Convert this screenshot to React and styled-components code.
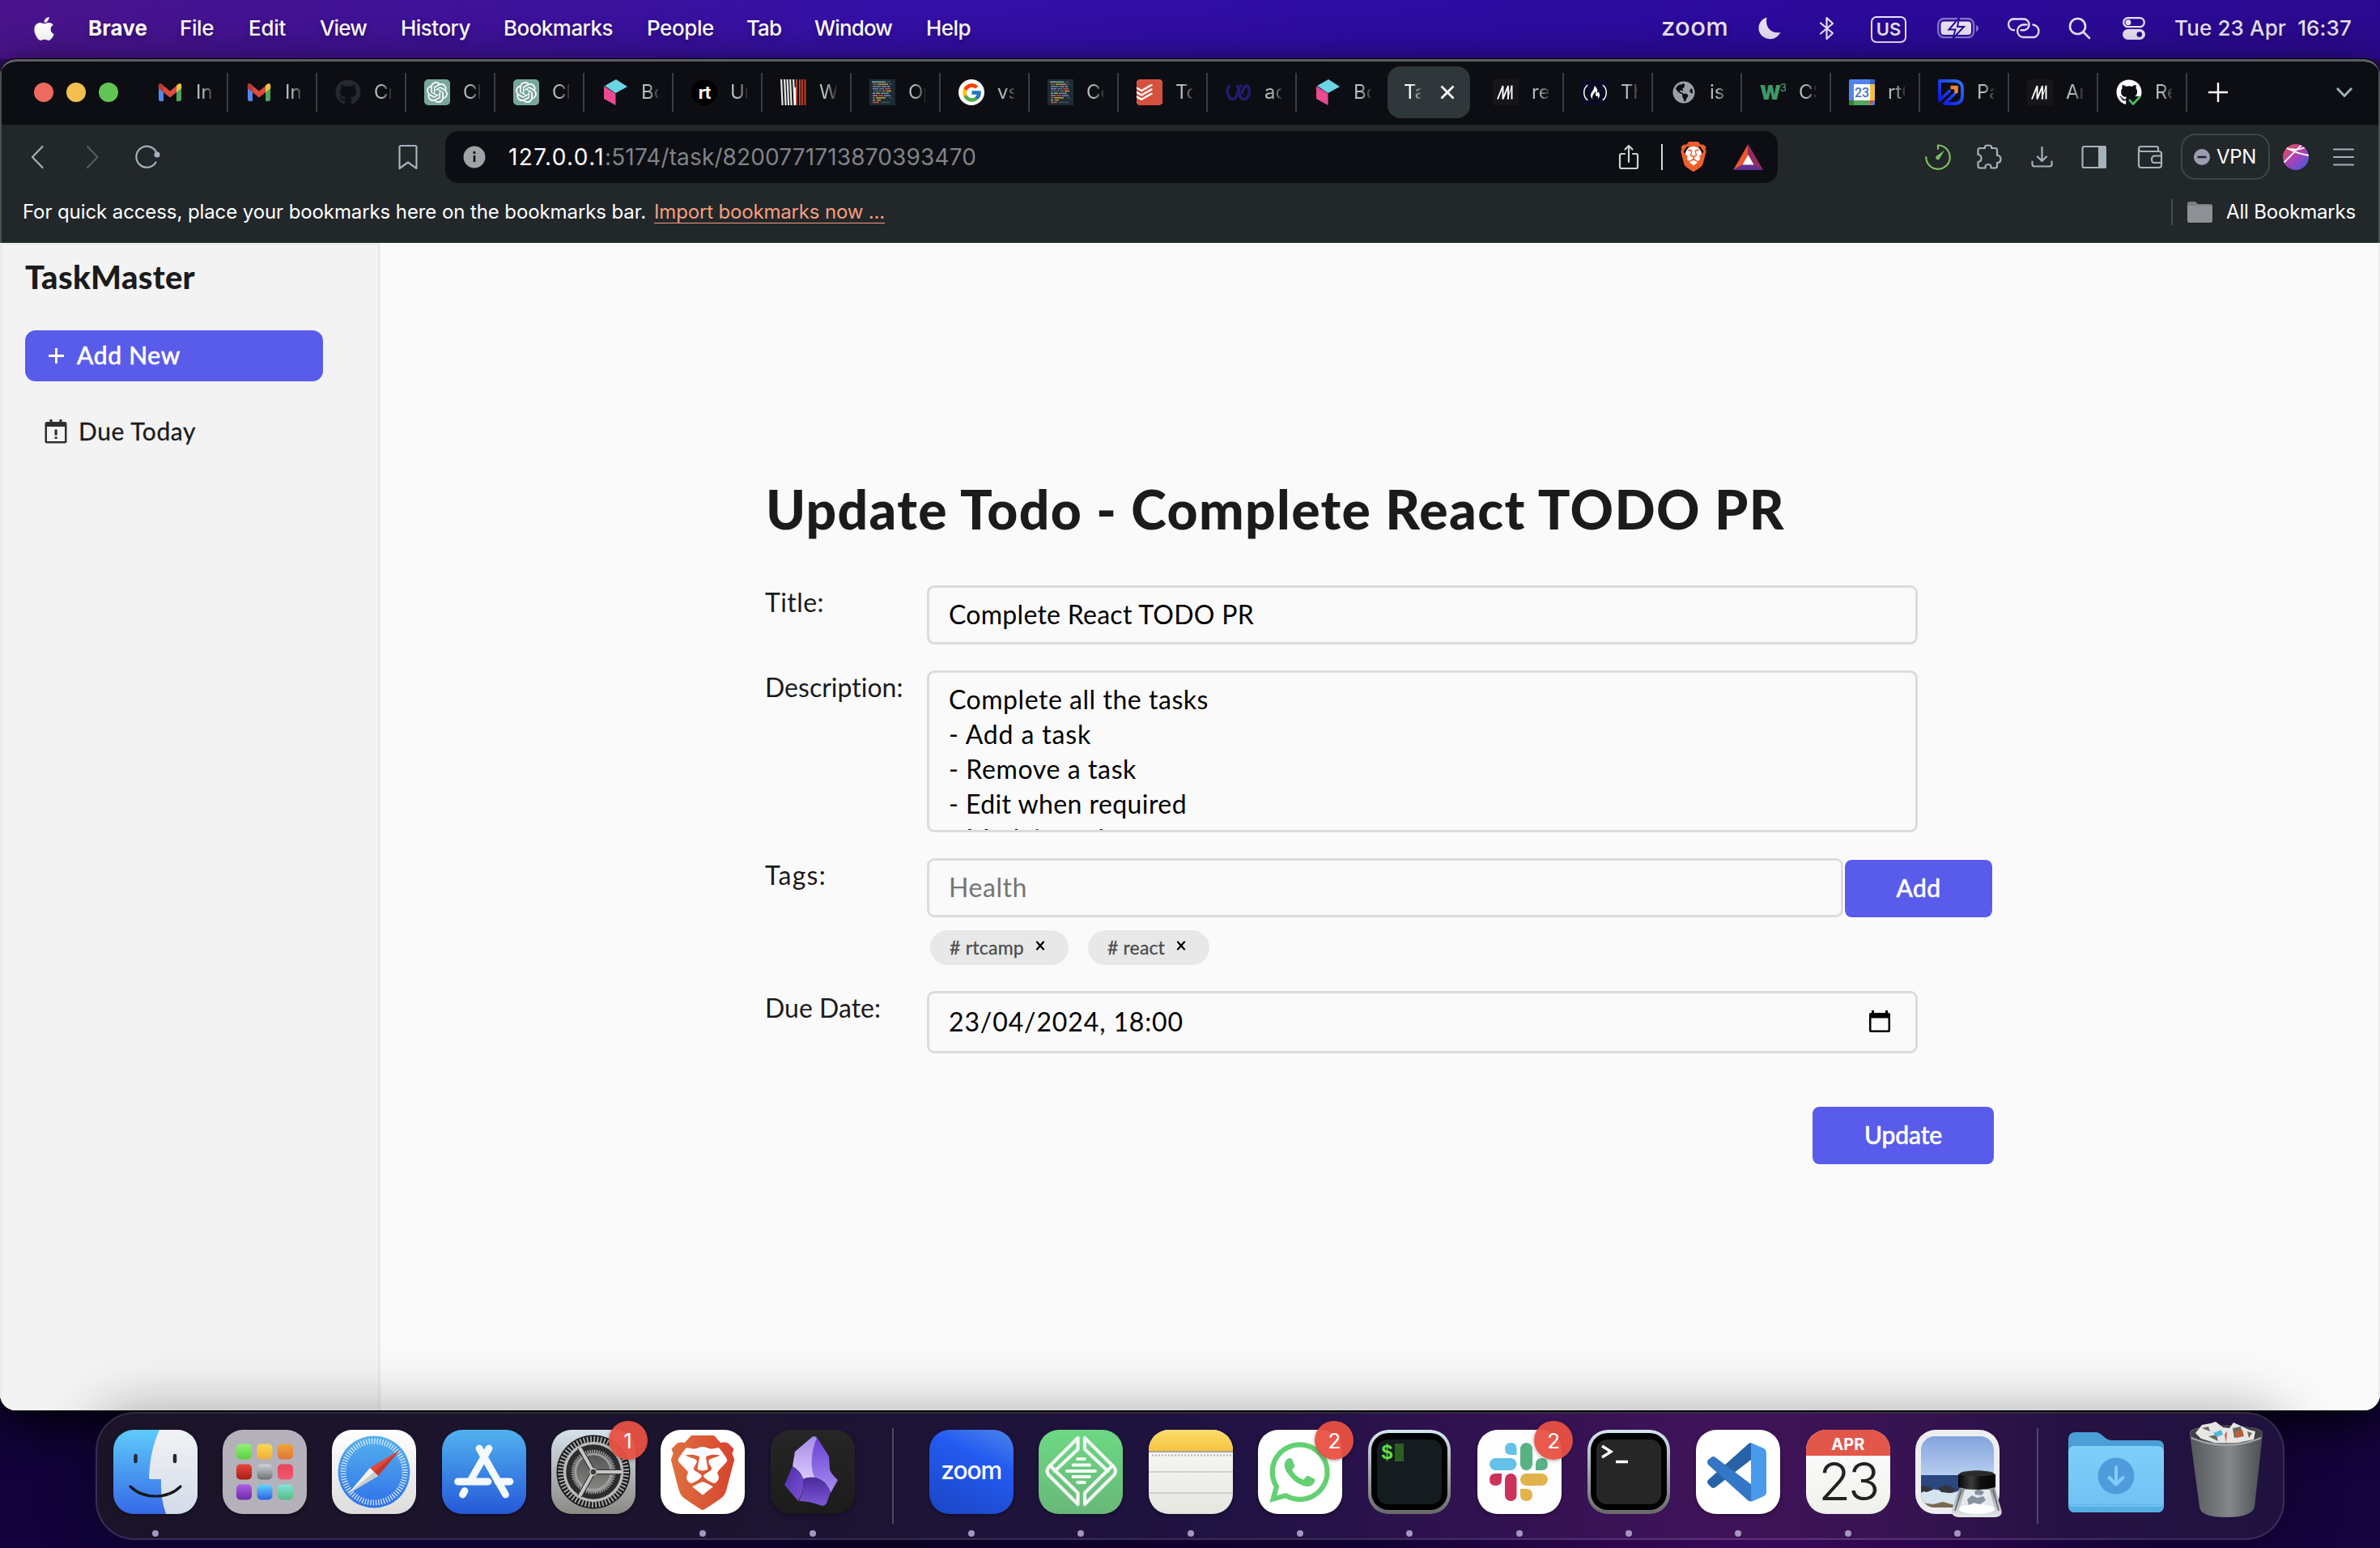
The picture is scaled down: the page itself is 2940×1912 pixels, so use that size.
import React, { useLayoutEffect, useRef, useState } from "react";
import styled, { createGlobalStyle, css } from "styled-components";
import { FaApple, FaGithub, FaWhatsapp, FaGlobeAmericas } from "react-icons/fa";
import { FcGoogle } from "react-icons/fc";
import { SiBrave, SiOpenai, SiTodoist, SiFreecodecamp } from "react-icons/si";

const ui = `Inter, "Liberation Sans", sans-serif`;
const body = `Lato, "Open Sans", sans-serif`;

const GlobalStyle = createGlobalStyle`
  *, *::before, *::after { box-sizing: border-box; }
  body { margin: 0; overflow: hidden; background: #0a0320; }
  svg { display: block; flex: none; }
`;

/* Text that spreads its letters to occupy a given width. */
const Spread = styled.span`
  display: inline-block;
  white-space: pre;
  flex: none;
`;

function Fit({ w, children }) {
  const ref = useRef(null);
  const [spacing, setSpacing] = useState(0);
  useLayoutEffect(() => {
    const natural = ref.current.getBoundingClientRect().width;
    setSpacing((w - natural) / children.length);
  }, []);
  return (
    <Spread ref={ref} style={{ letterSpacing: spacing }}>
      {children}
    </Spread>
  );
}

const Desktop = styled.div`
  width: 2940px;
  height: 1912px;
  display: flex;
  flex-direction: column;
  overflow: hidden;
  font-family: ${ui};
  background:
    linear-gradient(90deg, #2c0c58 0, #3d1190 1%, #2a0a90 98%, #2a0860 100%) 0 0 / 100% 110px no-repeat,
    linear-gradient(213deg, transparent 49.4%, #0d0226 49.5%, #11033a 70%) 0 100% / 2000px 170px no-repeat,
    radial-gradient(ellipse 500px 260px at 2180px 1850px, #4a0f70 0, #33085a 45%, rgba(19, 3, 60, 0) 100%),
    linear-gradient(90deg, #0b0228 0, #0d0226 30%, #14033c 60%, #14033c 100%);
`;

/* ---------- menu bar ---------- */

const MenuBar = styled.header`
  height: 73px;
  flex: none;
  display: flex;
  align-items: center;
  padding: 0 35px 4px 41px;
  color: #fff;
  font-size: 26px;
  font-weight: 500;
  background: linear-gradient(90deg, #4a148c 0, #3b119c 25%, #3510a6 36%, #2d0ca2 60%, #2b0a9a 80%, #2c0a90 100%);
  text-shadow: 0 3px 6px rgba(0, 0, 0, 0.3);
`;

const MenuItem = styled.span`
  width: ${(p) => p.$slot}px;
  flex: none;
  white-space: nowrap;
  font-weight: ${(p) => (p.$bold ? 700 : 500)};
`;

const AppleSlot = styled.span`
  width: 68px;
  flex: none;
  padding-top: 1px;
`;

const StatusArea = styled.div`
  margin-left: auto;
  display: flex;
  align-items: center;
  color: #e9e2f6;
`;

const StatusSlot = styled.span`
  display: flex;
  align-items: center;
  width: ${(p) => p.$slot}px;
  flex: none;
`;

const ZoomWord = styled.span`
  display: flex;
  font-family: ${ui};
  font-size: ${(p) => p.$size}px;
  line-height: 1;
  font-weight: 500;
  padding-bottom: ${(p) => p.$lift}px;
`;

const InputSource = styled.span`
  width: 44px;
  height: 33px;
  margin-top: 3px;
  border: 2.5px solid #e9e2f6;
  border-radius: 7px;
  display: flex;
  align-items: center;
  justify-content: center;
  font-size: 22px;
  font-weight: 600;
`;

const MENU = [
  ["Brave", 113, 73],
  ["File", 85, 42],
  ["Edit", 88, 46],
  ["View", 100, 58],
  ["History", 127, 86],
  ["Bookmarks", 177, 135],
  ["People", 123, 83],
  ["Tab", 84, 43],
  ["Window", 138, 96],
  ["Help", 60, 55],
];

function Menu() {
  return (
    <MenuBar>
      <AppleSlot>
        <FaApple size={33} style={{ marginLeft: -3 }} />
      </AppleSlot>
      {MENU.map(([name, slot, w], i) => (
        <MenuItem key={name} $slot={slot} $bold={i === 0}>
          <Fit w={w}>{name}</Fit>
        </MenuItem>
      ))}
      <StatusArea>
        <StatusSlot $slot={120}>
          <ZoomWord $size={31} $lift={4}>
            <Fit w={83}>zoom</Fit>
          </ZoomWord>
        </StatusSlot>
        <StatusSlot $slot={75}>
          <svg width="28" height="28" viewBox="0 0 28 28">
            <path d="M10.500 .5C8 12 15 21 27.500 19C24 25 19 28 13 27C5 26 0 20 .5 12.500C1 7 5 2 10.500 .5Z" fill="#e9e2f6" />
          </svg>
        </StatusSlot>
        <StatusSlot $slot={64}>
          <svg width="20" height="30" viewBox="0 0 20 30" fill="none" stroke="#e9e2f6" strokeWidth="2.2" strokeLinejoin="round" strokeLinecap="round">
            <path d="M2 8.500L17 21L9.500 28V2L17 9L2 21.500" />
          </svg>
        </StatusSlot>
        <StatusSlot $slot={82}>
          <InputSource>US</InputSource>
        </StatusSlot>
        <StatusSlot $slot={85}>
          <svg width="52" height="26" viewBox="0 0 52 26">
            <rect x="1.2" y="1.2" width="44" height="23" rx="7" fill="none" stroke="#8878cc" strokeWidth="2.2" />
            <path d="M48 9v8q3-1 3-4t-3-4z" fill="#8878cc" />
            <rect x="4.500" y="4.500" width="37.500" height="16.500" rx="4" fill="#e9e2f6" />
            <path d="M27 0L14.500 14.500h8l-3 11L33 11h-8z" fill="#e9e2f6" stroke="#2b0a9a" strokeWidth="2" />
          </svg>
        </StatusSlot>
        <StatusSlot $slot={77}>
          <svg width="44" height="26" viewBox="0 0 44 26" fill="none" stroke="#e9e2f6" strokeWidth="2.400" strokeLinecap="round">
            <path d="M10 15.200A7 7 0 0 1 8 1.500H23A7 7 0 0 1 23 15.200H18.500" />
            <path d="M33.500 8.500A8 8 0 0 1 35 24H21A7.800 7.800 0 0 1 21 8.500H25.500" />
          </svg>
        </StatusSlot>
        <StatusSlot $slot={67}>
          <svg width="28" height="28" viewBox="0 0 28 28" fill="none" stroke="#e9e2f6" strokeWidth="2.600" strokeLinecap="round">
            <circle cx="11.500" cy="11.500" r="9.500" />
            <path d="M18.500 18.500L26 26" />
          </svg>
        </StatusSlot>
        <StatusSlot $slot={64}>
          <svg width="28" height="28" viewBox="0 0 28 28">
            <rect x="1.200" y="1.200" width="25.600" height="11" rx="5.500" fill="none" stroke="#e9e2f6" strokeWidth="2.300" />
            <circle cx="7" cy="6.700" r="3.400" fill="#e9e2f6" />
            <rect x="0" y="15" width="28" height="13" rx="6.500" fill="#e9e2f6" />
            <circle cx="20.800" cy="21.500" r="3.300" fill="#2c0a92" />
          </svg>
        </StatusSlot>
        <Fit w={219}>{"Tue 23 Apr  16:37"}</Fit>
      </StatusArea>
    </MenuBar>
  );
}

/* ---------- browser window ---------- */

const Window = styled.section`
  height: 1669px;
  flex: none;
  display: flex;
  flex-direction: column;
  border-top: 3px solid #5c5f61;
  border-radius: 20px;
  overflow: hidden;
  background: #fafafa;
  box-shadow: 0 0 0 1px #000, 0 16px 60px rgba(0, 0, 0, 0.9);
`;

const chromeEdge = css`
  border: solid #4a4f52;
  border-width: 0 2px;
`;

const TabStrip = styled.div`
  ${chromeEdge}
  height: 78px;
  flex: none;
  display: flex;
  align-items: center;
  padding: 0 0 2px 40px;
  background: #0d0e13;
`;

const Lights = styled.div`
  display: flex;
  gap: 16px;
  width: 130px;
  flex: none;
`;

const Light = styled.span`
  width: 24px;
  height: 24px;
  border-radius: 50%;
  background: ${(p) => p.$color};
`;

const Tab = styled.div`
  width: 110px;
  height: 48px;
  flex: none;
  display: flex;
  align-items: center;
  gap: 16px;
  padding-left: 22px;
  border-right: 2px solid ${(p) => (p.$line ? "#3a3d42" : "transparent")};
`;

const TabLabel = styled.span`
  width: 21px;
  overflow: hidden;
  white-space: nowrap;
  font-size: 24px;
  line-height: 30px;
  color: ${(p) => (p.$active ? "#fff" : "#b9bcc1")};
  -webkit-mask-image: linear-gradient(90deg, #000 40%, rgba(0, 0, 0, 0.2) 100%);
  mask-image: linear-gradient(90deg, #000 40%, rgba(0, 0, 0, 0.2) 100%);
`;

const ActiveTab = styled.div`
  width: 102px;
  height: 64px;
  margin: 0 6px 0 2px;
  flex: none;
  display: flex;
  align-items: center;
  justify-content: space-between;
  padding: 0 19px 0 20px;
  border-radius: 16px;
  background: #30373a;
`;

const NewTab = styled.span`
  margin-left: 25px;
`;

const TabMenu = styled.span`
  margin-left: auto;
  padding-right: 31px;
`;

const Tile = styled.span`
  width: 32px;
  height: 32px;
  flex: none;
  display: flex;
  align-items: center;
  justify-content: center;
  overflow: hidden;
  color: ${(p) => p.$ink || "#fff"};
  background: ${(p) => p.$bg || "transparent"};
  border-radius: ${(p) => p.$r || 0}px;
  font-weight: ${(p) => p.$weight || 700};
  font-size: ${(p) => p.$size || 20}px;
  letter-spacing: ${(p) => p.$track || 0}px;
`;

const Superscript = styled.sup`
  font-size: 13px;
  line-height: 1;
  font-weight: 500;
  padding-top: 4px;
  align-self: flex-start;
`;

const Gmail = () => (
  <svg width="32" height="32" viewBox="0 0 32 32">
    <path d="M2 10v15q0 2 2 2h4V14z" fill="#4f87ee" />
    <path d="M30 10v15q0 2-2 2h-4V14z" fill="#4fa75a" />
    <path d="M8 8l8 6.500L24 8v8l-8 6.500L8 16z" fill="#dc4a3d" />
    <path d="M24 16V7.500q6-5 6.300.5v3z" fill="#f1bf42" />
    <path d="M8 16V7.500Q2 2.500 1.700 8v3z" fill="#b93a31" />
  </svg>
);
const Cube = () => (
  <svg width="32" height="32" viewBox="0 0 32 32">
    <path d="M17 0L31 9L16.500 17L3 8z" fill="#69d6e2" />
    <path d="M2 8.500l14.500 9V32L2 24z" fill="#ea4a90" />
  </svg>
);
const CODE_LINES = [
  [[3, 17, "#6fb5ae"], [21, 5, "#3c5361"]],
  [[4, 5, "#b9504e"], [10, 13, "#c59f3e"], [24, 4, "#3c5361"]],
  [[4, 10, "#5e8f97"], [15, 6, "#9a7fc0"], [22, 3, "#6fb5ae"]],
  [[4, 7, "#8f77c4"], [12, 6, "#5d7f93"], [19, 7, "#c94f4f"]],
  [[5, 10, "#4b6470"], [16, 4, "#c94f4f"], [21, 6, "#c59f3e"]],
  [[4, 3, "#6fb5ae"], [8, 5, "#c59f3e"], [14, 10, "#5d9a9a"]],
  [[4, 6, "#9a7fc0"], [11, 6, "#c94f4f"], [18, 8, "#8f77c4"]],
  [[4, 3, "#c94f4f"], [8, 12, "#c59f3e"], [24, 4, "#3c5361"]],
  [[4, 3, "#6fb5ae"], [9, 5, "#c59f3e"]],
  [[4, 8, "#c94f4f"], [14, 12, "#3c5361"]],
];
const CodeDoc = () => (
  <svg width="32" height="32" viewBox="0 0 32 32">
    <rect width="32" height="32" fill="#1d2b33" />
    {CODE_LINES.map((bits, row) =>
      bits.map(([x, w, fill]) => <rect key={`${row}-${x}`} x={x} y={2.5 + row * 2.8} width={w} height="1.500" fill={fill} />)
    )}
  </svg>
);
const Barcode = () => (
  <svg width="32" height="32" viewBox="0 0 32 32">
    <rect width="32" height="32" fill="#0d0e13" />
    {[0, 4, 7.5, 11, 15].map((x) => (
      <path key={x} d={`M${x} 0h2.200l1.500 32h-2.200z`} fill="#e8e8e8" />
    ))}
    {[19, 23, 26, 29.5].map((x) => (
      <rect key={x} x={x} width="1.900" height="32" fill="#c5442f" />
    ))}
    <rect x="17" y="10" width="2" height="22" fill="#fff" />
  </svg>
);
const Loops = () => (
  <svg width="32" height="32" viewBox="0 0 32 32" fill="none" stroke="#211d6e" strokeWidth="3.400">
    <path d="M6 8C0 8 1 24.500 9 24.500C16 24.500 14 8 20 8" />
    <path d="M13 8C19 8 14 24.500 22 24.500C31 24.500 31 8 26 8C22 8 22 13 20 18" />
  </svg>
);
const Slashes = () => (
  <svg width="32" height="32" viewBox="0 0 32 32" fill="none" stroke="#fff" strokeWidth="1.900" strokeLinejoin="bevel">
    <rect width="32" height="32" fill="#16161a" stroke="none" />
    <path d="M6 24.500L12.500 8V24.500L19 8V24.500M23.500 7.500V24.500" />
    <path d="M18 24.500L23.500 8" strokeWidth="1" />
  </svg>
);
const Arrow = () => (
  <svg width="32" height="32" viewBox="0 0 32 32" fill="none">
    <defs>
      <linearGradient id="paBlue" x1="1" y1="0" x2="0" y2="1">
        <stop offset="0" stopColor="#2f74ff" />
        <stop offset="1" stopColor="#0d12e8" />
      </linearGradient>
    </defs>
    <path d="M2 26V2H20Q30 2 30 12V20Q30 30 20 30H8L21 17.500M2 26L14 14.500" stroke="url(#paBlue)" strokeWidth="3.800" strokeLinejoin="round" strokeLinecap="round" />
    <path d="M15.500 10H22.500V17" stroke="#f08440" strokeWidth="4.600" />
  </svg>
);
const CalendarTile = () => (
  <svg width="32" height="32" viewBox="0 0 32 32">
    <rect width="32" height="32" rx="2" fill="#5384ec" />
    <rect x="6" y="6" width="20" height="20" fill="#fff" />
    <path d="M26 0h4q2 0 2 2v4h-6z" fill="#3367c9" />
    <rect x="26" y="6" width="6" height="20" fill="#f3c043" />
    <path d="M0 26h26v6H2q-2 0-2-2z" fill="#55a55d" />
    <path d="M0 26h6v6H2q-2 0-2-2z" fill="#3b7f40" />
    <path d="M26 26h6l-6 6z" fill="#dc4a3d" />
    <text x="16" y="21.500" textAnchor="middle" fontFamily="Roboto" fontSize="16" fontWeight="500" fill="#3f6fce">23</text>
  </svg>
);
const GithubOk = () => (
  <svg width="32" height="32" viewBox="0 0 32 32">
    <FaGithub size={32} color="#fff" />
    <path d="M13 21h19v11H15z" fill="#0d0e13" />
    <path d="M16 25l5 5.500L30 21" fill="none" stroke="#4fc35b" strokeWidth="2.600" />
  </svg>
);

const TABS_LEFT = [
  ["In", <Gmail />],
  ["In", <Gmail />],
  ["Cr", <FaGithub size={32} color="#25282e" />],
  ["Cl", <Tile $bg="#79a69b" $r={5}><SiOpenai size={26} /></Tile>],
  ["Cl", <Tile $bg="#79a69b" $r={5}><SiOpenai size={26} /></Tile>],
  ["Bo", <Cube />],
  ["Un", <Tile $bg="#000" $r={16} $size={21} $track={-1}>rt</Tile>],
  ["W", <Barcode />],
  ["Op", <CodeDoc />],
  ["vs", <Tile $bg="#fff" $r={16}><FcGoogle size={27} /></Tile>],
  ["Co", <CodeDoc />],
  ["To", <SiTodoist size={32} color="#d6503e" style={{ background: "#fff", borderRadius: 5 }} />],
  ["ac", <Loops />],
  ["Bo", <Cube />],
];
const TABS_RIGHT = [
  ["re", <Slashes />],
  ["Th", <Tile $bg="#0a0a23"><SiFreecodecamp size={29} /></Tile>],
  ["is", <FaGlobeAmericas size={28} color="#9aa0a6" style={{ margin: 2 }} />],
  ["CS", <Tile $ink="#3f9a68" $size={24} $weight={900} $track={-1}>W<Superscript>3</Superscript></Tile>],
  ["rtC", <CalendarTile />],
  ["Pa", <Arrow />],
  ["Ar", <Slashes />],
  ["Re", <GithubOk />],
];

const Toolbar = styled.div`
  ${chromeEdge}
  height: 80px;
  flex: none;
  display: flex;
  align-items: center;
  padding-bottom: 1px;
  background: #22272a;
  color: #a5b2bb;
`;

const ToolSlot = styled.span`
  display: flex;
  align-items: center;
  width: ${(p) => p.$slot}px;
  flex: none;
`;

const AddressBar = styled.div`
  width: 1646px;
  height: 64px;
  flex: none;
  display: flex;
  align-items: center;
  padding: 0 18px 0 22px;
  border-radius: 16px;
  background: #0d0e13;
  font-size: 28px;
`;

const Url = styled.div`
  margin: 0 auto 0 28px;
  padding-top: 1px;
  color: #808388;
  white-space: nowrap;
`;

const Host = styled.span`
  color: #fff;
`;

const Vpn = styled.div`
  width: 110px;
  height: 57px;
  margin-right: 16px;
  flex: none;
  display: flex;
  align-items: center;
  gap: 8px;
  padding-left: 14px;
  border: 2px solid #3d464b;
  border-radius: 18px;
  color: #fff;
  font-size: 24px;
`;

const BookmarksBar = styled.div`
  ${chromeEdge}
  height: 66px;
  flex: none;
  display: flex;
  align-items: center;
  padding: 0 28px 11px 26px;
  background: #22272a;
  color: #fff;
  font-size: 24px;
`;

const ImportLink = styled.a`
  margin-left: 10px;
  color: #f79e80;
  line-height: 27px;
  border-bottom: 1.5px solid #f79e80;
`;

const AllBookmarks = styled.div`
  margin-left: auto;
  display: flex;
  align-items: center;
  gap: 17px;
  height: 32px;
  padding-left: 18px;
  border-left: 2px solid #454b4f;
`;

const line = { fill: "none", stroke: "#a5b2bb", strokeWidth: 2.2, strokeLinecap: "round", strokeLinejoin: "round" };

function BraveFace() {
  return (
    <svg width="32" height="37" viewBox="0 0 32 37">
      <ellipse cx="16" cy="18" rx="10.500" ry="13" fill="#fff" />
      <SiBrave size="37" x="-2.500" y="0" color="#ee5f2a" />
    </svg>
  );
}

function Chrome() {
  return (
    <>
      <TabStrip>
        <Lights>
          <Light $color="#ed6a5f" />
          <Light $color="#f5bf4f" />
          <Light $color="#61c554" />
        </Lights>
        {TABS_LEFT.map(([label, icon], i) => (
          <Tab key={i} $line={i < 13}>
            {icon}
            <TabLabel>{label}</TabLabel>
          </Tab>
        ))}
        <ActiveTab>
          <TabLabel $active>Tas</TabLabel>
          <svg width="18" height="18" viewBox="0 0 18 18" stroke="#fff" strokeWidth="2.800">
            <path d="M1.500 1.500L16.500 16.500M16.500 1.500L1.500 16.500" />
          </svg>
        </ActiveTab>
        {TABS_RIGHT.map(([label, icon], i) => (
          <Tab key={i} $line>
            {icon}
            <TabLabel>{label}</TabLabel>
          </Tab>
        ))}
        <NewTab>
          <svg width="26" height="26" viewBox="0 0 26 26" stroke="#fff" strokeWidth="2.400">
            <path d="M13 1V25M1 13H25" />
          </svg>
        </NewTab>
        <TabMenu>
          <svg width="22" height="14" viewBox="0 0 22 14" fill="none" stroke="#a5b2bb" strokeWidth="2.800">
            <path d="M2 2L11 11.500L20 2" />
          </svg>
        </TabMenu>
      </TabStrip>
      <Toolbar>
        <ToolSlot $slot={36} />
        <ToolSlot $slot={68}>
          <svg width="18" height="30" viewBox="0 0 18 30" {...line}>
            <path d="M14.500 2L2 15L14.500 28" />
          </svg>
        </ToolSlot>
        <ToolSlot $slot={60}>
          <svg width="18" height="30" viewBox="0 0 18 30" {...line} stroke="#555d62">
            <path d="M2 2L14.500 15L2 28" />
          </svg>
        </ToolSlot>
        <ToolSlot $slot={325}>
          <svg width="32" height="30" viewBox="0 0 32 30" {...line}>
            <path d="M26.500 21.500A13 13 0 1 1 27.500 10" />
            <circle cx="28" cy="12" r="3.600" fill="#a5b2bb" stroke="none" />
          </svg>
        </ToolSlot>
        <ToolSlot $slot={59}>
          <svg width="26" height="32" viewBox="0 0 26 32" {...line}>
            <path d="M2.500 30V4Q2.500 2 4.500 2H21.500Q23.500 2 23.500 4V30L13 22.500Z" />
          </svg>
        </ToolSlot>
        <AddressBar>
          <svg width="28" height="28" viewBox="0 0 28 28">
            <circle cx="14" cy="14" r="13.500" fill="#9fa2a6" />
            <path d="M14 12V20" stroke="#0d0e13" strokeWidth="2.600" />
            <circle cx="14" cy="8.500" r="1.700" fill="#0d0e13" />
          </svg>
          <Url>
            <Host><Fit w={119}>127.0.0.1</Fit></Host>
            <Fit w={459}>:5174/task/8200771713870393470</Fit>
          </Url>
          <ToolSlot $slot={53}>
            <svg width="26" height="32" viewBox="0 0 26 32" {...line} stroke="#d0d3d6">
              <path d="M8 12H4Q2 12 2 14V28Q2 30 4 30H22Q24 30 24 28V14Q24 12 22 12H18M13 22V2M8.500 6.500L13 2L17.500 6.500" />
            </svg>
          </ToolSlot>
          <ToolSlot $slot={24}>
            <svg width="2" height="32"><rect width="2" height="32" fill="#d5d8da" /></svg>
          </ToolSlot>
          <ToolSlot $slot={65}><BraveFace /></ToolSlot>
          <svg width="37" height="32" viewBox="0 0 37 32">
            <path d="M18.500 0L0 32L12 25.500L18.500 13Z" fill="#f0552b" />
            <path d="M18.500 0L37 32L25 25.500L18.500 13Z" fill="#952a62" />
            <path d="M0 32H37L25.500 25H11.500Z" fill="#643093" />
            <path d="M18.500 13L11.500 25.500H25.500Z" fill="#fff" />
          </svg>
        </AddressBar>
        <ToolSlot $slot={182} />
        <ToolSlot $slot={64}>
          <svg width="32" height="32" viewBox="0 0 32 32" fill="none" stroke="#7cbf62" strokeWidth="2.200" strokeLinecap="round">
            <path d="M16 6V1.500A14.700 14.700 0 1 1 1.300 16.200" />
            <path d="M24 7.500L18.300 17.200A2.600 2.600 0 1 1 14.800 14.300Z" fill="#7cbf62" stroke="none" />
          </svg>
        </ToolSlot>
        <ToolSlot $slot={67}>
          <svg width="31" height="31" viewBox="0 0 31 31" {...line}>
            <path d="M4 5H10Q9 1.500 14 1.500T18 5H22.500Q25 5 25 7.500V14Q29.500 14 29.500 18.500T25 23V27Q25 29.500 22.500 29.500H17.500Q18 25 14 25T10.500 29.500H4Q1.500 29.500 1.500 27V22Q5.500 21.500 5.500 17.500T1.500 13V7.500Q1.500 5 4 5Z" />
          </svg>
        </ToolSlot>
        <ToolSlot $slot={62}>
          <svg width="27" height="26" viewBox="0 0 27 26" {...line}>
            <path d="M13.500 1V18M8 12.500L13.500 18L19 12.500M1.500 18.500V22Q1.500 24.500 4 24.500H23Q25.500 24.500 25.500 22V18.500" />
          </svg>
        </ToolSlot>
        <ToolSlot $slot={69}>
          <svg width="32" height="30" viewBox="0 0 32 30">
            <rect x="1.500" y="2" width="28" height="26" rx="2" {...line} />
            <path d="M21 1H29Q31 1 31 3V27Q31 29 29 29H21Z" fill="#a5b2bb" />
          </svg>
        </ToolSlot>
        <ToolSlot $slot={54}>
          <svg width="32" height="30" viewBox="0 0 32 30" {...line}>
            <path d="M26 8V4Q26 2 24 2H5Q2 2 2 5T5 8H27Q30 8 30 11V25Q30 28 27 28H5Q2 28 2 25V5M30 13.500H22Q18 13.500 18 18T22 22H30" />
          </svg>
        </ToolSlot>
        <Vpn>
          <svg width="20" height="20" viewBox="0 0 20 20">
            <circle cx="10" cy="10" r="10" fill="#9a9cb0" />
            <rect x="4.500" y="8.700" width="11" height="2.600" fill="#22272a" />
          </svg>
          <Fit w={49}>VPN</Fit>
        </Vpn>
        <ToolSlot $slot={61}>
          <svg width="32" height="32" viewBox="0 0 32 32">
            <defs>
              <linearGradient id="ball" x1="0.100" y1="0" x2="0.900" y2="1">
                <stop offset="0" stopColor="#e0564f" />
                <stop offset="0.450" stopColor="#b43fb0" />
                <stop offset="1" stopColor="#3f5be0" />
              </linearGradient>
              <clipPath id="ballClip"><circle cx="16" cy="16" r="16" /></clipPath>
            </defs>
            <g clipPath="url(#ballClip)">
              <rect width="32" height="32" fill="url(#ball)" />
              <path d="M2 3Q14 11 32 14M24 0L0 24M9 6Q20 8 30 3" fill="none" stroke="#fff" strokeWidth="1.800" />
            </g>
          </svg>
        </ToolSlot>
        <svg width="28" height="24" viewBox="0 0 28 24" {...line}>
          <path d="M2 2.500H26M2 12H26M2 21.500H26" />
        </svg>
      </Toolbar>
      <BookmarksBar>
        <Fit w={770}>For quick access, place your bookmarks here on the bookmarks bar.</Fit>
        <ImportLink><Fit w={285}>Import bookmarks now ...</Fit></ImportLink>
        <AllBookmarks>
          <svg width="31" height="26" viewBox="0 0 31 26">
            <path d="M0 3Q0 0 3 0H10L13 3H28Q31 3 31 6V23Q31 26 28 26H3Q0 26 0 23Z" fill="#7c7d82" />
            <path d="M0 5H31V23Q31 26 28 26H3Q0 26 0 23Z" fill="#8f9095" />
          </svg>
          <Fit w={160}>All Bookmarks</Fit>
        </AllBookmarks>
      </BookmarksBar>
    </>
  );
}

/* ---------- TaskMaster page ---------- */

const Page = styled.div`
  flex: 1;
  display: flex;
  border: solid #ececec;
  border-width: 0 2px;
  background: #fafafa;
  color: #1b1b1b;
  font-family: ${body};
`;

const Sidebar = styled.aside`
  width: 468px;
  flex: none;
  padding: 15px 0 0 28px;
  border: 3px solid #ebebeb;
  border-left-width: 1px;
  border-bottom: 0;
  background: #f3f3f3;
`;

const Brand = styled.div`
  height: 48px;
  font-size: 40px;
  line-height: 48px;
  font-weight: 900;
`;

const AddNew = styled.button`
  width: 368px;
  height: 63px;
  margin-top: 42px;
  display: flex;
  align-items: center;
  gap: 16px;
  padding: 0 0 0 29px;
  border: 0;
  border-radius: 13px;
  background: #595ceb;
  color: #fff;
  font: 400 30px/36px ${body};
  -webkit-text-stroke: 0.7px #fff;
`;

const ButtonText = styled.span`
  margin-top: -4px;
`;

const NavItem = styled.div`
  display: flex;
  align-items: center;
  gap: 14px;
  margin-top: 44px;
  padding-left: 24px;
  font-size: 30px;
  line-height: 34px;
  height: 36px;
  -webkit-text-stroke: 0.3px #1b1b1b;
`;

const NavText = styled.span`
  margin-top: -2px;
`;

const Main = styled.main`
  flex: 1;
  padding: 292px 0 0 475px;
`;

const Heading = styled.h1`
  margin: 0 0 57px 1px;
  height: 74px;
  font-size: 66px;
  line-height: 74px;
  font-weight: 900;
`;

const Form = styled.form`
  width: 1518px;
  display: flex;
  flex-direction: column;
  gap: 32px;
`;

const Row = styled.div`
  display: grid;
  grid-template-columns: 200px 1fr;
  align-items: start;
`;

const Label = styled.label`
  padding-top: 2px;
  font-size: 32px;
  line-height: 38px;
`;

const field = css`
  display: flex;
  align-items: center;
  border: 3px solid #dcdcdc;
  border-radius: 9px;
  padding: 0 26px 2px 24px;
  font: 400 32px/38px ${body};
  color: #000;
  background: #fafafa;
`;

const TextBox = styled.div`
  ${field}
  width: ${(p) => p.$w || 1224}px;
  height: ${(p) => p.$h || 73}px;
  color: ${(p) => (p.$placeholder ? "#757575" : "#000")};
  justify-content: space-between;
`;

const TextArea = styled.div`
  ${field}
  display: block;
  width: 1224px;
  height: 200px;
  padding-top: 11px;
  padding-bottom: 0;
  line-height: 43px;
  overflow: hidden;
`;

const TextLine = styled.div`
  height: 43px;
`;

const TagRow = styled.div`
  display: flex;
  align-items: flex-end;
`;

const Action = styled.button`
  width: ${(p) => p.$w}px;
  height: 75px;
  margin-bottom: -2px;
  flex: none;
  border: 2px solid #fff;
  border-radius: 10px;
  padding: 0 0 3px;
  background: #595ceb;
  background-clip: padding-box;
  color: #fff;
  font: 400 30px/36px ${body};
  -webkit-text-stroke: 0.7px #fff;
`;

const Chips = styled.div`
  display: flex;
  gap: 24px;
  padding: 16px 0 0 4px;
`;

const Chip = styled.span`
  height: 43px;
  width: ${(p) => p.$w}px;
  display: flex;
  align-items: center;
  justify-content: space-between;
  padding: 0 29px 2px 24px;
  border-radius: 22px;
  background: #e8e8e8;
  color: #4c4c4c;
  font-size: 23px;
  line-height: 30px;
  -webkit-text-stroke: 0.3px #4c4c4c;
`;

const Submit = styled.div`
  display: flex;
  justify-content: flex-end;
  margin-top: 32px;
  margin-right: -2px;
`;

const Cross = () => (
  <svg width="12" height="12" viewBox="0 0 12 12" stroke="#000" strokeWidth="2.200" strokeLinecap="round" style={{ marginTop: -3 }}>
    <path d="M2 1.500L10 10.500M10 1.500L2 10.500" />
  </svg>
);

const DESCRIPTION = [
  ["Complete all the tasks", 321],
  ["- Add a task", 176],
  ["- Remove a task", 232],
  ["- Edit when required", 294],
  ["- Mark it as done", 247],
];

function TaskMaster() {
  return (
    <Page>
      <Sidebar>
        <Brand><Fit w={210}>TaskMaster</Fit></Brand>
        <AddNew type="button">
          <svg width="19" height="19" viewBox="0 0 19 19" stroke="#fff" strokeWidth="3">
            <path d="M9.500 0V19M0 9.500H19" />
          </svg>
          <ButtonText><Fit w={128}>Add New</Fit></ButtonText>
        </AddNew>
        <NavItem>
          <svg width="28" height="30" viewBox="0 0 28 30">
            <path d="M3 3H25Q27.500 3 27.500 5.500V27Q27.500 29.500 25 29.500H3Q.5 29.500 .5 27V5.500Q.5 3 3 3ZM3 9V27H25V9Z" fill="#2f2f31" fillRule="evenodd" />
            <path d="M6.500 0h3v4h-3zM18.500 0h3v4h-3zM12.500 12.500h3.200v7h-3.200zM12.500 21.500h3.200v2.500h-3.200z" fill="#2f2f31" />
          </svg>
          <NavText><Fit w={145}>Due Today</Fit></NavText>
        </NavItem>
      </Sidebar>
      <Main>
        <Heading><Fit w={1259}>Update Todo - Complete React TODO PR</Fit></Heading>
        <Form>
          <Row>
            <Label><Fit w={73}>Title:</Fit></Label>
            <TextBox><Fit w={377}>Complete React TODO PR</Fit></TextBox>
          </Row>
          <Row>
            <Label><Fit w={171}>Description:</Fit></Label>
            <TextArea>
              {DESCRIPTION.map(([text, w]) => (
                <TextLine key={text}><Fit w={w}>{text}</Fit></TextLine>
              ))}
            </TextArea>
          </Row>
          <Row>
            <Label><Fit w={76}>Tags:</Fit></Label>
            <div>
              <TagRow>
                <TextBox $w={1132} $placeholder><Fit w={97}>Health</Fit></TextBox>
                <Action type="button" $w={186}><Fit w={55}>Add</Fit></Action>
              </TagRow>
              <Chips>
                <Chip $w={171}><Fit w={92}># rtcamp</Fit><Cross /></Chip>
                <Chip $w={150}><Fit w={71}># react</Fit><Cross /></Chip>
              </Chips>
            </div>
          </Row>
          <Row>
            <Label><Fit w={143}>Due Date:</Fit></Label>
            <TextBox $h={77}>
              <Fit w={290}>23/04/2024, 18:00</Fit>
              <svg width="37" height="30" viewBox="0 0 37 30">
                <path d="M8 4H30Q32 4 32 6V26Q32 28 30 28H8Q6 28 6 26V6Q6 4 8 4ZM8.500 10.500V25.500H29.500V10.500Z" fillRule="evenodd" />
                <path d="M9 1h3v4h-3zM26 1h3v4h-3z" />
              </svg>
            </TextBox>
          </Row>
          <Submit>
            <Action type="button" $w={228}><Fit w={96}>Update</Fit></Action>
          </Submit>
        </Form>
      </Main>
    </Page>
  );
}

/* ---------- dock ---------- */

const DockBar = styled.nav`
  width: 2704px;
  height: 158px;
  margin: 2px auto 0;
  flex: none;
  display: flex;
  align-items: flex-start;
  padding: 20px 0 0 19.5px;
  position: relative;
  border: 2px solid rgba(255, 255, 255, 0.17);
  border-radius: 48px;
  background: linear-gradient(90deg, #1b1428 0, #1c1430 30%, #201243 52%, #321251 64%, #401359 74%, #381352 82%, #251243 90%, #20123f 100%) padding-box;
  box-shadow: 0 0 70px 4px rgba(0, 0, 0, 0.3);
`;

const DockItem = styled.div`
  width: 104px;
  margin-right: 31.4px;
  flex: none;
  position: relative;
  display: flex;
  flex-direction: column;
  align-items: center;
  gap: 20px;
  &::after {
    content: "";
    width: 8px;
    height: 8px;
    border-radius: 50%;
    background: ${(p) => (p.$running ? "#a596c0" : "transparent")};
  }
`;

const Face = styled.div`
  width: 104px;
  height: 104px;
  border-radius: 25px;
  overflow: hidden;
  display: flex;
  align-items: center;
  justify-content: center;
  background: ${(p) => p.$bg || "transparent"};
  box-shadow: ${(p) => (p.$flat ? "none" : "0 2px 4px rgba(0, 0, 0, 0.35)")};
  color: #fff;
`;

const Badge = styled.span`
  position: absolute;
  top: -11px;
  right: -14.5px;
  width: 48px;
  height: 48px;
  border-radius: 50%;
  display: flex;
  align-items: center;
  justify-content: center;
  background: rgba(232, 80, 66, 0.95);
  color: #fff;
  font-size: 26px;
  box-shadow: 0 1px 4px rgba(0, 0, 0, 0.35);
`;

const Divider = styled.span`
  width: 2px;
  height: 118px;
  margin: -2px ${(p) => p.$after}px 0 ${(p) => p.$before}px;
  flex: none;
  background: #514767;
`;

const CalendarFace = styled.div`
  width: 104px;
  height: 104px;
  border-radius: 25px;
  overflow: hidden;
  display: flex;
  flex-direction: column;
  background: linear-gradient(#fff, #f0f0ec);
  text-align: center;
`;

const CalendarMonth = styled.div`
  height: 32px;
  flex: none;
  padding-top: 6px;
  background: #e25749;
  color: #fff;
  font-size: 20px;
  font-weight: 700;
  line-height: 24px;
`;

const CalendarDay = styled.div`
  color: #222;
  font-size: 65px;
  font-weight: 300;
  line-height: 63px;
  letter-spacing: -3px;
`;

const Svg = ({ children, w = 104, h = 104 }) => (
  <svg width={w} height={h} viewBox={`0 0 ${w} ${h}`}>{children}</svg>
);

const Grad = ({ id, from, to, x2 = 0, y2 = 1 }) => (
  <linearGradient id={id} x1="0" y1="0" x2={x2} y2={y2}>
    <stop offset="0" stopColor={from} />
    <stop offset="1" stopColor={to} />
  </linearGradient>
);

const Finder = () => (
  <Svg>
    <defs>
      <Grad id="fBlue" from="#5ecbfa" to="#3668e8" />
      <Grad id="fWhite" from="#f2f2f5" to="#d2dbe8" />
    </defs>
    <rect width="104" height="104" fill="url(#fBlue)" />
    <path d="M57 0Q45 26 44 59Q44 61 46 61H59Q58 84 65 104H104V0Z" fill="url(#fWhite)" />
    <path d="M27.500 32V39M76 32V39" stroke="#26292f" strokeWidth="4.500" strokeLinecap="round" />
    <path d="M21 70Q33 82 52 82T83 70" fill="none" stroke="#16181c" strokeWidth="3.200" strokeLinecap="round" />
  </Svg>
);

const PADS = [
  ["#93f272", "#58d03f"], ["#f7dc4f", "#f3ab3c"], ["#eda53a", "#e17437"],
  ["#e6453a", "#a91e16"], ["#ccd4da", "#6e7072"], ["#e9425c", "#f15a6f"],
  ["#b05de6", "#6a2ba8"], ["#5fd5fb", "#2c60ea"], ["#84e3dd", "#54bd83"],
];

const Launchpad = () => (
  <Svg>
    {PADS.map(([from, to], i) => (
      <g key={i}>
        <defs><Grad id={`pad${i}`} from={from} to={to} /></defs>
        <rect x={17 + (i % 3) * 25.5} y={17.5 + Math.floor(i / 3) * 25} width="19" height="19" rx="5" fill={`url(#pad${i})`} />
      </g>
    ))}
  </Svg>
);

const Safari = () => (
  <Svg>
    <defs><Grad id="saf" from="#55b2ee" to="#3070e8" /></defs>
    <circle cx="52" cy="52" r="44.500" fill="url(#saf)" />
    <circle cx="52" cy="52" r="38" fill="none" stroke="#e6f1fc" strokeWidth="7" strokeDasharray="1.200 2.116" />
    <path d="M84 25L57 57L47 47Z" fill="#e0493c" />
    <path d="M84 25L57 57L52 52Z" fill="#c13a30" />
    <path d="M20 79L47 47L57 57Z" fill="#f4f4f4" />
    <path d="M20 79L52 52L57 57Z" fill="#c9cacc" />
  </Svg>
);

const AppStore = () => (
  <Svg>
    <g stroke="#f4f9ff" strokeWidth="8.800" strokeLinecap="round" fill="none">
      <path d="M19.500 64H57" />
      <path d="M69 64H84" />
      <path d="M46 23L78.500 80" />
      <path d="M58 23L35 63" />
      <path d="M28 75.500L25.500 80" />
    </g>
  </Svg>
);

const Settings = () => (
  <Svg>
    <defs><Grad id="hub" from="#50514f" to="#8a8a86" /></defs>
    <circle cx="52" cy="52" r="45.500" fill="#1b1b1c" />
    <circle cx="52" cy="52" r="40.500" fill="none" stroke="#a9abac" strokeWidth="7" strokeDasharray="1.900 2.340" />
    <circle cx="52" cy="52" r="35.500" fill="#2c2c2d" stroke="#b9bbbc" strokeWidth="3.500" />
    <circle cx="52" cy="52" r="25.500" fill="url(#hub)" stroke="#9b9d9d" strokeWidth="4" strokeDasharray="1.400 1.400" />
    <circle cx="52" cy="52" r="22" fill="none" stroke="#a0a2a2" strokeWidth="2.500" />
    <path d="M52 52H87M52 52L35 22M52 52L35 82" stroke="#3a3a3a" strokeWidth="6.500" />
    <path d="M52 52H87M52 52L35 22M52 52L35 82" stroke="#c6c8c8" strokeWidth="4" />
    <circle cx="52" cy="52" r="4" fill="#3b3b3b" stroke="#c8c8c8" strokeWidth="1.500" />
  </Svg>
);

const BraveDock = () => (
  <svg width="104" height="104" viewBox="0 0 104 104">
    <defs><Grad id="brv" from="#dd7140" to="#d7432d" x2={1} y2={0} /></defs>
    <SiBrave x="6" y="7" size={92} fill="url(#brv)" />
  </svg>
);

const Obsidian = () => (
  <Svg>
    <defs>
      <Grad id="ob1" from="#a78be8" to="#d8c9fa" />
      <Grad id="ob2" from="#6a3fd4" to="#a88cf0" />
      <Grad id="ob3" from="#4f2bb0" to="#7a55cf" x2={1} />
      <Grad id="ob4" from="#4a2a9c" to="#7d58d6" />
    </defs>
    <path d="M51 9Q54 7 57 9L72 33L73 49Q75 55 83 62L74 78Q68 60 52 59Q46 40 57 9Z" fill="url(#ob2)" />
    <path d="M51 9L30 27L27 45Q38 52 40 61Q46 58 54 59Q46 38 57 10Q54 7 51 9Z" fill="url(#ob1)" />
    <path d="M27 45L17 68L34 88Q42 74 40 61Q38 52 27 45Z" fill="url(#ob3)" />
    <path d="M40 61Q46 58 54 59Q68 62 74 77L69 91Q67 94 64 94Q48 88 35 88Q42 74 40 61Z" fill="url(#ob4)" />
  </Svg>
);

const Proxy = () => {
  const half = "M48.500 10V24L20 51M48.500 10L12.500 46Q8.500 51 12.500 56L48.500 92V78L14 44";
  return (
    <Svg>
      <g fill="none" stroke="#f4f8f4" strokeWidth="4.200" strokeLinejoin="round" strokeLinecap="round">
        <path d={half} />
        <path d={half} transform="translate(105.500 0) scale(-1 1)" />
        <path d="M48 36H57M42.500 43.500H63M35 51H70M42.500 58H63M48 65H57" strokeWidth="3.800" />
      </g>
    </Svg>
  );
};

const Notes = () => (
  <Svg>
    <defs>
      <Grad id="nty" from="#fbdc6c" to="#f6c440" />
      <Grad id="ntw" from="#fafafa" to="#e6e6e0" />
    </defs>
    <rect width="104" height="104" fill="url(#ntw)" />
    <rect width="104" height="26" fill="url(#nty)" />
    <rect y="26" width="104" height="2" fill="#a9a591" />
    <path d="M4 31.500H104" stroke="#b3b3b0" strokeWidth="2" strokeDasharray="2 2" />
    <path d="M0 52H104M0 78H104" stroke="#cfced3" strokeWidth="2" />
  </Svg>
);

const TerminalFace = ({ screen, children }) => (
  <Svg>
    <defs><Grad id="rim" from="#d5e6f0" to="#6a6869" /></defs>
    <rect x="1" y="0" width="102" height="104" rx="25" fill="url(#rim)" />
    <rect x="5" y="4" width="94" height="95" rx="21" fill="#000" />
    <rect x="12" y="12" width="80" height="80" rx="13" fill={screen} />
    {children}
  </Svg>
);

const Slack = () => (
  <Svg>
    <path d="M41.500 16Q48.500 16 48.500 23.500V31H41.500Q34 31 34 23.500T41.500 16Z" fill="#63c1ea" />
    <rect x="15" y="35" width="33.500" height="15" rx="7.500" fill="#63c1ea" />
    <rect x="53" y="16" width="15" height="34" rx="7.500" fill="#58b283" />
    <path d="M72 50V42.500Q72 35 79.500 35T87 42.500T79.500 50Z" fill="#58b283" />
    <path d="M30 54V61.500Q30 69 22.500 69T15 61.500T22.500 54Z" fill="#cd325b" />
    <rect x="34" y="54" width="14.500" height="34" rx="7.200" fill="#cd325b" />
    <rect x="53" y="54" width="34" height="15" rx="7.500" fill="#e2b34c" />
    <path d="M53 73H60.500Q68 73 68 80.500T60.500 88T53 80.500Z" fill="#e2b34c" />
  </Svg>
);

const VsCode = () => (
  <Svg>
    <path d="M68 16V37L24 71Q21 73 19 71L15 67Q13 64 15 62L64 18Q66 16 68 16Z" fill="#2862a6" />
    <path d="M24 34Q21 32 19 34L15 37Q13 40 15 43L64 87Q66 89 69 88V68Z" fill="#3377c6" />
    <path d="M68 16L84 23Q87 25 87 28V77Q87 80 84 82L68 89Z" fill="#4a9aeb" />
  </Svg>
);

const Preview = () => (
  <svg width="112" height="112" viewBox="0 0 112 112" style={{ margin: "0 -8px -8px 0" }}>
    <defs>
      <Grad id="sky" from="#83a4dd" to="#b6cdef" />
      <Grad id="glass" from="#8e949b" to="#e6e8ea" />
      <linearGradient id="lid" x1="0" x2="1">
        <stop offset="0" stopColor="#060606" />
        <stop offset="0.350" stopColor="#3c3c3e" />
        <stop offset="0.600" stopColor="#101011" />
        <stop offset="1" stopColor="#050505" />
      </linearGradient>
      <clipPath id="photo"><rect x="7" y="8" width="90" height="88" rx="17" /></clipPath>
    </defs>
    <rect width="104" height="104" rx="25" fill="#eeeef0" />
    <g clipPath="url(#photo)">
      <rect x="7" y="8" width="90" height="48" fill="url(#sky)" />
      <rect x="7" y="56" width="90" height="40" fill="#2a477f" />
      <path d="M7 78Q20 70 34 76T60 70L97 74V96H7Z" fill="#d5e4ee" />
      <path d="M7 69L16 70L22 74L14 77L7 75ZM28 72L38 68L50 73L44 78L32 77Z" fill="#35363c" />
      <path d="M7 90L22 92L34 89L48 93L46 97H7Z" fill="#7c6a4e" />
    </g>
    <path d="M55 71L45 98Q43 107 54 108H98Q109 107 106 98L98 71Z" fill="url(#glass)" />
    <path d="M61 74L54 99H98L92 74Z" fill="#e4e9ee" />
    <path d="M57 74L49 100M96 74L103 100" stroke="#5f646b" strokeWidth="1.600" />
    <ellipse cx="76" cy="98" rx="22" ry="6" fill="#fff" />
    <path d="M73 76L79 73L85 77L82 81L74 80ZM64 86L70 81L76 84L84 82L87 87L80 92L72 90L66 93Z" fill="#8791a2" />
    <path d="M53 55Q76 46 99 55V71Q76 77 53 71Z" fill="url(#lid)" />
    <ellipse cx="76" cy="54" rx="21" ry="3.500" fill="#2b2b2d" />
  </svg>
);

const Folder = () => (
  <svg width="118" height="104" viewBox="0 0 118 104">
    <defs><Grad id="fld" from="#7fcffb" to="#6fc0f2" /></defs>
    <path d="M0 12Q0 3 9 3H34Q38 3 42 7L47 11Q50 13 54 13H110Q118 13 118 21V60H0Z" fill="#4b9fd6" />
    <path d="M0 28Q0 20 8 20H110Q118 20 118 28V93Q118 102 110 102H8Q0 102 0 93Z" fill="url(#fld)" />
    <path d="M0 95H118Q117 102 110 102H8Q1 102 0 95Z" fill="#56aee2" />
    <path d="M0 92.500H118" stroke="#62b6e8" strokeWidth="1.500" />
    <circle cx="59" cy="57" r="22.500" fill="#4f9bdc" />
    <path d="M59 46V67M50.500 59L59 67.500L67.500 59" fill="none" stroke="#80cdf9" strokeWidth="4" strokeLinecap="round" strokeLinejoin="round" />
  </svg>
);

const Trash = () => (
  <svg width="92" height="120" viewBox="0 0 92 120" style={{ marginTop: -10 }}>
    <defs>
      <linearGradient id="can" x1="0" x2="1">
        <stop offset="0" stopColor="#55585c" />
        <stop offset="0.300" stopColor="#6f7275" />
        <stop offset="0.550" stopColor="#85888b" />
        <stop offset="0.800" stopColor="#63666a" />
        <stop offset="1" stopColor="#4c4e52" />
      </linearGradient>
    </defs>
    <path d="M1 15Q0 9 14 7L78 7Q92 9 91 15L81 105Q78 118 46 118T13 105Z" fill="url(#can)" />
    <ellipse cx="46" cy="15" rx="44" ry="11" fill="#3e4044" />
    <path d="M8 14L16 4L27 2L33 0L42 7L50 8L55 1L66 6L74 10L82 12L80 22L60 26L32 26L15 21Z" fill="#e6e6e4" />
    <path d="M16 8L24 6L26 12ZM54 8L64 6L66 16L56 20ZM24 18L34 16L36 24ZM72 12L78 14L74 20Z" fill="#6b6660" />
    <path d="M30 14L40 10L42 16L34 19Z" fill="#4fbcd8" />
    <path d="M44 16L47 12L46 26Z" fill="#d0563f" />
    <path d="M56 12L66 10L68 18L58 20Z" fill="#b8603a" />
    <path d="M3 20Q46 38 89 20" fill="none" stroke="#a4a6a9" strokeWidth="2" />
  </svg>
);

function Dock() {
  return (
    <DockBar>
      <DockItem $running><Face><Finder /></Face></DockItem>
      <DockItem><Face $bg="#b4b1ba"><Launchpad /></Face></DockItem>
      <DockItem><Face $bg="linear-gradient(#fff, #dcdcdc)"><Safari /></Face></DockItem>
      <DockItem><Face $bg="linear-gradient(#51b2ef, #2558d8)"><AppStore /></Face></DockItem>
      <DockItem>
        <Face $bg="linear-gradient(#d6e2ea, #8b8984)"><Settings /></Face>
        <Badge>1</Badge>
      </DockItem>
      <DockItem $running><Face $bg="#fff"><BraveDock /></Face></DockItem>
      <DockItem $running><Face $bg="linear-gradient(#262626, #1b1b1b)"><Obsidian /></Face></DockItem>
      <Divider $before={15} $after={43.5} />
      <DockItem $running>
        <Face $bg="linear-gradient(205deg, #4c86ea 0, #235af0 35%, #1b46c4 100%)">
          <ZoomWord $size={30} $lift={4}><Fit w={75}>zoom</Fit></ZoomWord>
        </Face>
      </DockItem>
      <DockItem $running><Face $bg="linear-gradient(#6dd883, #68b879)"><Proxy /></Face></DockItem>
      <DockItem $running><Face><Notes /></Face></DockItem>
      <DockItem $running>
        <Face $bg="#fff"><FaWhatsapp size={85} color="#63d073" /></Face>
        <Badge>2</Badge>
      </DockItem>
      <DockItem $running>
        <Face $flat>
          <TerminalFace screen="#141c1f">
            <text x="17" y="36" fontFamily="Liberation Mono" fontWeight="700" fontSize="25" fill="#62e23e">$</text>
            <rect x="34" y="17" width="11" height="22" fill="#2c5f1f" />
          </TerminalFace>
        </Face>
      </DockItem>
      <DockItem $running>
        <Face $bg="#fdfdfd"><Slack /></Face>
        <Badge>2</Badge>
      </DockItem>
      <DockItem $running>
        <Face $flat>
          <TerminalFace screen="#262626">
            <path d="M19 20L30 27L19 34M36 39.500H51" fill="none" stroke="#fff" strokeWidth="3.400" />
          </TerminalFace>
        </Face>
      </DockItem>
      <DockItem $running><Face $bg="#fff"><VsCode /></Face></DockItem>
      <DockItem $running>
        <CalendarFace>
          <CalendarMonth>APR</CalendarMonth>
          <CalendarDay>23</CalendarDay>
        </CalendarFace>
      </DockItem>
      <DockItem $running><Preview /></DockItem>
      <Divider $before={14} $after={37} />
      <Folder />
      <ToolSlot $slot={31} />
      <Trash />
    </DockBar>
  );
}

export default function App() {
  return (
    <Desktop>
      <GlobalStyle />
      <Menu />
      <Window>
        <Chrome />
        <TaskMaster />
      </Window>
      <Dock />
    </Desktop>
  );
}
